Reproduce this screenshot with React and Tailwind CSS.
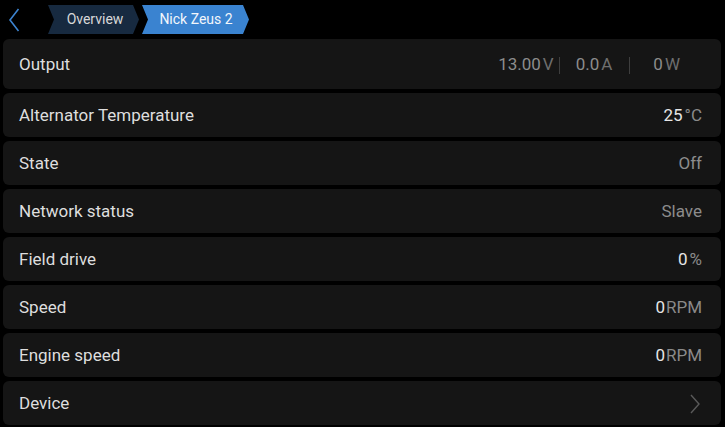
import React from 'react';

const rows = [
  { label: 'Alternator Temperature', value: '25', unit: '°C', bright: true },
  { label: 'State', value: 'Off' },
  { label: 'Network status', value: 'Slave' },
  { label: 'Field drive', value: '0', unit: '%', bright: true },
  { label: 'Speed', value: '0', unit: 'RPM', bright: true, tight: true },
  { label: 'Engine speed', value: '0', unit: 'RPM', bright: true, tight: true },
];

const Row = ({ label, children, tall, pr = 'pr-[19px]' }) => (
  <div
    className={`flex items-center justify-between rounded-md bg-[#151515] pl-4 pt-[2px] ${pr} ${
      tall ? 'h-[50px]' : 'h-[44px]'
    }`}
  >
    <span className="text-[17px] text-[#dedede]">{label}</span>
    {children}
  </div>
);

const Value = ({ value, unit, bright, tight }) => (
  <span className="flex items-baseline text-[17px]">
    <span className={bright ? 'text-[#e6e6e6]' : 'text-[#8c8c8c]'}>{value}</span>
    {unit && (
      <span className={`text-[#8a8a8a] ${tight ? 'ml-[1px]' : 'ml-[2px]'}`}>{unit}</span>
    )}
  </span>
);

export default function App() {
  return (
    <div
      className="w-[725px] h-[427px] bg-black overflow-hidden"
      style={{ fontFamily: 'Roboto, "Liberation Sans", sans-serif' }}
    >
      <div className="h-[39px] flex items-center">
        <svg width="12" height="24" viewBox="0 0 12 24" className="ml-[8px] mr-[28px]">
          <path d="M10.5 1 L2 12 L10.5 23" fill="none" stroke="#3d84d0" strokeWidth="1.6" />
        </svg>
        <div className="flex items-center gap-[3px]">
          <div className="h-[29px] w-[91px] bg-[#172a40] flex items-center justify-center pl-[3px] text-[14px] text-[#d8d8d8] [clip-path:polygon(0_0,calc(100%-6px)_0,100%_50%,calc(100%-6px)_100%,0_100%,6px_50%)]">
            Overview
          </div>
          <div className="h-[29px] w-[107px] bg-[#3a83d0] flex items-center justify-center pl-[1px] text-[14px] text-[#f2f6fb] [clip-path:polygon(0_0,calc(100%-6px)_0,100%_50%,calc(100%-6px)_100%,0_100%,6px_50%)]">
            Nick Zeus 2
          </div>
        </div>
      </div>

      <div className="flex flex-col gap-[4px] ml-[3px] mr-[4px]">
        <Row label="Output" tall pr="pr-[41px]">
          <div className="flex items-center text-[17px]">
            <span className="text-[#8c8c8c]">13.00</span>
            <span className="ml-[2px] text-[#6e6e6e]">V</span>
            <span className="ml-[5px] mr-[16px] h-[17px] w-px bg-[#3e3e3e]" />
            <span className="text-[#8c8c8c]">0.0</span>
            <span className="ml-[2px] text-[#6e6e6e]">A</span>
            <span className="ml-[17px] mr-[23px] h-[17px] w-px bg-[#3e3e3e]" />
            <span className="text-[#8c8c8c]">0</span>
            <span className="ml-[2px] text-[#6e6e6e]">W</span>
          </div>
        </Row>
        {rows.map((r) => (
          <Row key={r.label} label={r.label}>
            <Value {...r} />
          </Row>
        ))}
        <Row label="Device">
          <svg width="10" height="20" viewBox="0 0 10 20" className="mr-[2px]">
            <path d="M1 1 L9 10 L1 19" fill="none" stroke="#5a5a5a" strokeWidth="1.4" />
          </svg>
        </Row>
      </div>
    </div>
  );
}
